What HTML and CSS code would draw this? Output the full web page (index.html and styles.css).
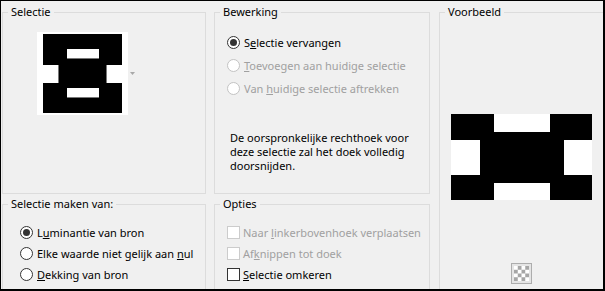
FILE: index.html
```html
<!DOCTYPE html>
<html lang="nl">
<head>
    <meta charset="UTF-8">
    <title>Selectie uit masker</title>
    <link rel="stylesheet" href="styles.css">
</head>
<body>
    <div class="dialog">
        <fieldset class="group group-selection">
            <legend>Selectie</legend>
            <div class="thumb-row">
                <div class="thumb">
                    <svg width="79" height="79" viewBox="0 0 79 79">
                        <rect width="79" height="79" fill="#000"/>
                        <rect x="24" y="15" width="32" height="10" fill="#fff"/>
                        <rect x="24" y="24" width="32" height="1" fill="#777"/>
                        <rect x="24" y="54" width="32" height="10" fill="#fff"/>
                        <rect x="24" y="63" width="32" height="1" fill="#777"/>
                        <rect x="0" y="31" width="16" height="18" fill="#fff"/>
                        <rect x="15" y="31" width="1" height="18" fill="#777"/>
                        <rect x="63" y="31" width="16" height="18" fill="#fff"/>
                        <rect x="63" y="31" width="1" height="18" fill="#777"/>
                    </svg>
                </div>
                <svg class="drop-arrow" width="5" height="3" viewBox="0 0 5 3">
                    <path d="M0 0H5L2.5 3Z" fill="#a8a8a8"/>
                </svg>
            </div>
        </fieldset>

        <fieldset class="group group-edit">
            <legend>Bewerking</legend>
            <div class="choices choices-edit">
                <div class="choice"><span class="radio checked"></span><span>S<u>e</u>lectie vervangen</span></div>
                <div class="choice disabled"><span class="radio"></span><span><u>T</u>oevoegen aan huidige selectie</span></div>
                <div class="choice disabled"><span class="radio"></span><span>Van <u>h</u>uidige selectie aftrekken</span></div>
            </div>
            <p class="note">De oorspronkelijke rechthoek voor deze selectie zal het doek volledig doorsnijden.</p>
        </fieldset>

        <fieldset class="group group-preview">
            <legend>Voorbeeld</legend>
            <div class="preview">
                <svg class="preview-image" width="141" height="86" viewBox="0 0 141 86">
                    <rect width="141" height="86" fill="#000"/>
                    <rect x="43" y="0" width="56" height="18" fill="#fff"/>
                    <rect x="0" y="26" width="29" height="35" fill="#fff"/>
                    <rect x="113" y="26" width="28" height="35" fill="#fff"/>
                    <rect x="43" y="69" width="56" height="17" fill="#fff"/>
                </svg>
                <div class="checker-button"><div class="checker"></div></div>
            </div>
        </fieldset>

        <fieldset class="group group-source">
            <legend>Selectie maken van:</legend>
            <div class="choices choices-source">
                <div class="choice"><span class="radio checked"></span><span>L<u>u</u>minantie van bron</span></div>
                <div class="choice"><span class="radio"></span><span>Elke waarde niet gelijk aan <u>n</u>ul</span></div>
                <div class="choice"><span class="radio"></span><span><u>D</u>ekking van bron</span></div>
            </div>
        </fieldset>

        <fieldset class="group group-options">
            <legend>Opties</legend>
            <div class="choices choices-options">
                <div class="choice disabled"><span class="check"></span><span>Naar <u>l</u>inkerbovenhoek verplaatsen</span></div>
                <div class="choice disabled"><span class="check"></span><span>Af<u>k</u>nippen tot doek</span></div>
                <div class="choice"><span class="check"></span><span><u>S</u>electie omkeren</span></div>
            </div>
        </fieldset>
    </div>
</body>
</html>
```

FILE: styles.css
```css
body {
    margin: 0;
    font-family: "Noto Sans", "Open Sans", sans-serif;
    font-size: 11px;
    color: #000;
}
.dialog {
    width: 605px;
    height: 291px;
    box-sizing: border-box;
    border-style: solid;
    border-color: #000;
    border-width: 1px 2px 2px 1px;
    background-color: #f0f0f0;
    padding: 3px 0 0 1px;
    overflow: hidden;
    display: grid;
    grid-template-columns: 204px 216px 166px;
    grid-template-rows: 190px 100px;
    column-gap: 8px;
    row-gap: 2px;
}
.group {
    margin: 0;
    padding: 0;
    min-width: 0;
    border: 1px solid #dcdcdc;
}
.group legend {
    margin-left: 5px;
    padding: 0 3px;
    line-height: 16px;
}
.group-preview {
    grid-column: 3;
    grid-row: 1 / 3;
    margin-left: 1px;
}
.group-source {
    grid-column: 1;
    grid-row: 2;
}
.group-options {
    grid-column: 2;
    grid-row: 2;
}

/* selectie */
.thumb-row {
    display: flex;
    align-items: center;
    margin: 12px 0 0 34px;
}
.thumb {
    background-color: #fff;
    padding: 2px 6px;
}
.thumb svg {
    display: block;
}
.drop-arrow {
    display: block;
    margin-left: 2px;
}

/* keuzes */
.choices-edit {
    padding: 11px 0 0 12px;
}
.choices-edit .choice {
    height: 23px;
}
.choices-source {
    padding: 10px 0 0 17px;
}
.choices-options {
    padding: 10px 0 0 12px;
}
.choices-source .choice, .choices-options .choice {
    height: 21px;
}
.choice {
    display: flex;
    align-items: center;
    white-space: nowrap;
}
.choice.disabled {
    color: #a0a0a0;
}
.radio, .check {
    flex: none;
    width: 13px;
    height: 13px;
    box-sizing: border-box;
    border: 1px solid #333;
    background-color: #fff;
    margin-right: 4px;
    position: relative;
}
.radio {
    border-radius: 50%;
}
.check {
    margin-right: 3px;
}
.radio.checked::after {
    content: "";
    position: absolute;
    left: 2px;
    top: 2px;
    width: 7px;
    height: 7px;
    border-radius: 50%;
    background-color: #333;
}
.disabled .radio {
    border-color: #c3c3c3;
}
.disabled .check {
    border-color: #cccccc;
}
.note {
    margin: 31px 0 0 15px;
    width: 186px;
    line-height: 14px;
}

/* voorbeeld */
.preview {
    display: flex;
    flex-direction: column;
    align-items: center;
}
.preview-image {
    display: block;
    margin-top: 94px;
}
.checker-button {
    margin-top: 63px;
    width: 21px;
    height: 21px;
    box-sizing: border-box;
    border: 1px solid #adadad;
    background-color: #e5e5e5;
    padding: 2px;
}
.checker {
    width: 15px;
    height: 15px;
    background-color: #fff;
    background-image: conic-gradient(#a6a6a6 25%, #fff 0 50%, #a6a6a6 0 75%, #fff 0);
    background-size: 7.5px 7.5px;
}
```
